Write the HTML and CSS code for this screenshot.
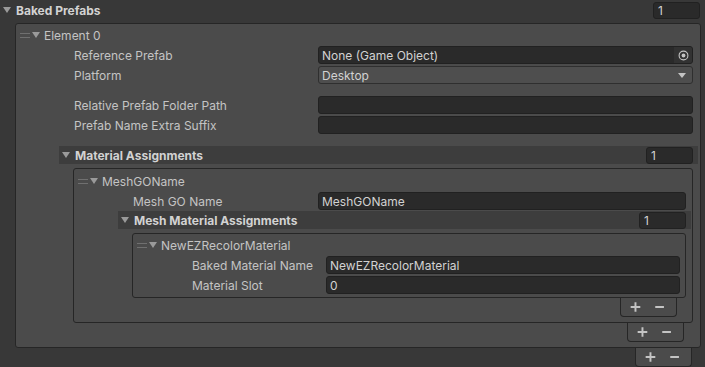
FILE: index.html
```html
<!DOCTYPE html>
<html lang="en">
<head>
  <meta charset="UTF-8">
  <title>Baked Prefabs</title>
  <link rel="stylesheet" href="styles.css">
</head>
<body>
  <div class="inspector">
    <!-- Baked Prefabs array -->
    <div class="header top">
      <span class="arrow"></span>
      <span class="title">Baked Prefabs</span>
      <div class="count">1</div>
    </div>

    <div class="list-block top">
      <div class="rlist level-1">
        <div class="element-row">
          <span class="handle"></span><span class="arrow"></span><span>Element 0</span>
        </div>
        <div class="prop">
          <span class="label">Reference Prefab</span>
          <div class="field object">
            <span class="value">None (Game Object)</span>
            <span class="picker">
              <svg width="11" height="11" viewBox="0 0 11 11"><circle cx="5.5" cy="5.5" r="4.4" fill="none" stroke="#c4c4c4" stroke-width="1.1"/><circle cx="5.5" cy="5.5" r="1.9" fill="#c4c4c4"/></svg>
            </span>
          </div>
        </div>
        <div class="prop">
          <span class="label">Platform</span>
          <div class="field popup">
            <span class="value">Desktop</span>
            <span class="popup-arrow"></span>
          </div>
        </div>
        <div class="prop spaced">
          <span class="label">Relative Prefab Folder Path</span>
          <div class="field"></div>
        </div>
        <div class="prop">
          <span class="label">Prefab Name Extra Suffix</span>
          <div class="field"></div>
        </div>

        <!-- Material Assignments array -->
        <div class="section outer-section">
          <div class="header band">
            <span class="arrow"></span>
            <span class="title">Material Assignments</span>
            <div class="count">1</div>
          </div>
          <div class="list-block">
            <div class="rlist level-2">
              <div class="element-row">
                <span class="handle"></span><span class="arrow"></span><span>MeshGOName</span>
              </div>
              <div class="prop">
                <span class="label">Mesh GO Name</span>
                <div class="field"><span class="value">MeshGOName</span></div>
              </div>

              <!-- Mesh Material Assignments array -->
              <div class="section inner-section">
                <div class="header band">
                  <span class="arrow"></span>
                  <span class="title">Mesh Material Assignments</span>
                  <div class="count">1</div>
                </div>
                <div class="list-block">
                  <div class="rlist level-3">
                    <div class="element-row">
                      <span class="handle"></span><span class="arrow"></span><span>NewEZRecolorMaterial</span>
                    </div>
                    <div class="prop">
                      <span class="label">Baked Material Name</span>
                      <div class="field"><span class="value">NewEZRecolorMaterial</span></div>
                    </div>
                    <div class="prop">
                      <span class="label">Material Slot</span>
                      <div class="field"><span class="value">0</span></div>
                    </div>
                  </div>
                  <div class="footer">
                    <svg width="57" height="18" viewBox="0 0 57 18"><path d="M10 9h10M15 4v10M35.5 9h9" stroke="#c4c4c4" stroke-width="2"/></svg>
                  </div>
                </div>
              </div>
            </div>
            <div class="footer">
              <svg width="57" height="18" viewBox="0 0 57 18"><path d="M10 9h10M15 4v10M35.5 9h9" stroke="#c4c4c4" stroke-width="2"/></svg>
            </div>
          </div>
        </div>
      </div>
      <div class="footer">
        <svg width="57" height="18" viewBox="0 0 57 18"><path d="M10 9h10M15 4v10M35.5 9h9" stroke="#c4c4c4" stroke-width="2"/></svg>
      </div>
    </div>
  </div>
</body>
</html>
```

FILE: styles.css
```css
* {
  box-sizing: border-box;
}

body {
  margin: 0;
  background: #383838;
  font-family: Inter, "Noto Sans", sans-serif;
  font-size: 12px;
  color: #c4c4c4;
  overflow: hidden;
}

.inspector {
  padding-top: 1px;
}

/* foldout headers */
.header {
  display: flex;
  align-items: center;
  height: 18px;
  padding: 0 5px 0 3px;
}

.header .title {
  margin-left: 5px;
  font-weight: bold;
  color: #d2d2d2;
}

.band {
  background: #3d3d3d;
}

.arrow {
  flex: none;
  width: 0;
  height: 0;
  border-left: 4px solid transparent;
  border-right: 4px solid transparent;
  border-top: 6px solid #9a9a9a;
}

.count {
  margin-left: auto;
  width: 47px;
  height: 17px;
  padding-left: 4px;
  line-height: 15px;
  background: #2a2a2a;
  border: 1px solid #212121;
  border-radius: 3px;
  color: #d2d2d2;
}

/* reorderable lists */
.list-block {
  margin: 4px 5px 0 14px;
}

.list-block.top {
  margin: 4px 4px 0 15px;
}

.rlist {
  background: #4b4b4b;
  border: 1px solid #262626;
  border-radius: 3px;
  padding-bottom: 5px;
}

.rlist.level-3 {
  padding-bottom: 3px;
}

.footer {
  display: flex;
  width: 57px;
  height: 19px;
  margin-left: auto;
  margin-right: 9px;
  background: #4b4b4b;
  border: 1px solid #262626;
  border-top: none;
  border-radius: 0 0 4px 4px;
}

.element-row {
  display: flex;
  align-items: center;
  height: 18px;
  margin-top: 2px;
  padding-left: 4px;
}

.level-2 > .element-row {
  margin-top: 3px;
}

.handle {
  flex: none;
  width: 10px;
  height: 5px;
  margin-right: 2px;
  border-top: 1px solid #707070;
  border-bottom: 1px solid #707070;
}

.element-row .arrow {
  margin-right: 4px;
}

/* property rows */
.prop {
  display: flex;
  align-items: center;
  height: 18px;
  margin-top: 2px;
}

.prop.spaced {
  margin-top: 12px;
}

.level-1 > .prop {
  padding: 0 7px 0 58px;
}

.level-1 > .prop .label {
  width: 244px;
}

.level-2 > .prop {
  padding: 0 6px 0 59px;
}

.level-2 > .prop .label {
  width: 185px;
}

.level-3 > .prop {
  padding: 0 5px 0 59px;
}

.level-3 > .prop .label {
  width: 134px;
}

.label {
  flex: none;
  white-space: nowrap;
}

.field {
  flex: 1;
  display: flex;
  align-items: center;
  height: 18px;
  padding-left: 3px;
  background: #2a2a2a;
  border: 1px solid #212121;
  border-radius: 3px;
  color: #d2d2d2;
}

.field .value {
  flex: 1;
}

.field.object {
  padding-right: 0;
}

.picker {
  display: flex;
  align-items: center;
  justify-content: center;
  width: 18px;
  height: 16px;
  background: #323232;
  border-radius: 0 2px 2px 0;
}

.field.popup {
  background: #4e4e4e;
  border-color: #2f2f2f;
  padding-right: 6px;
}

.popup-arrow {
  width: 0;
  height: 0;
  border-left: 4px solid transparent;
  border-right: 4px solid transparent;
  border-top: 5px solid #c4c4c4;
}

/* nested array sections */
.section {
  margin-top: 12px;
}

.outer-section {
  margin: 12px 2px 0 43px;
}

.inner-section {
  margin: 1px 1px 0 44px;
}
```
